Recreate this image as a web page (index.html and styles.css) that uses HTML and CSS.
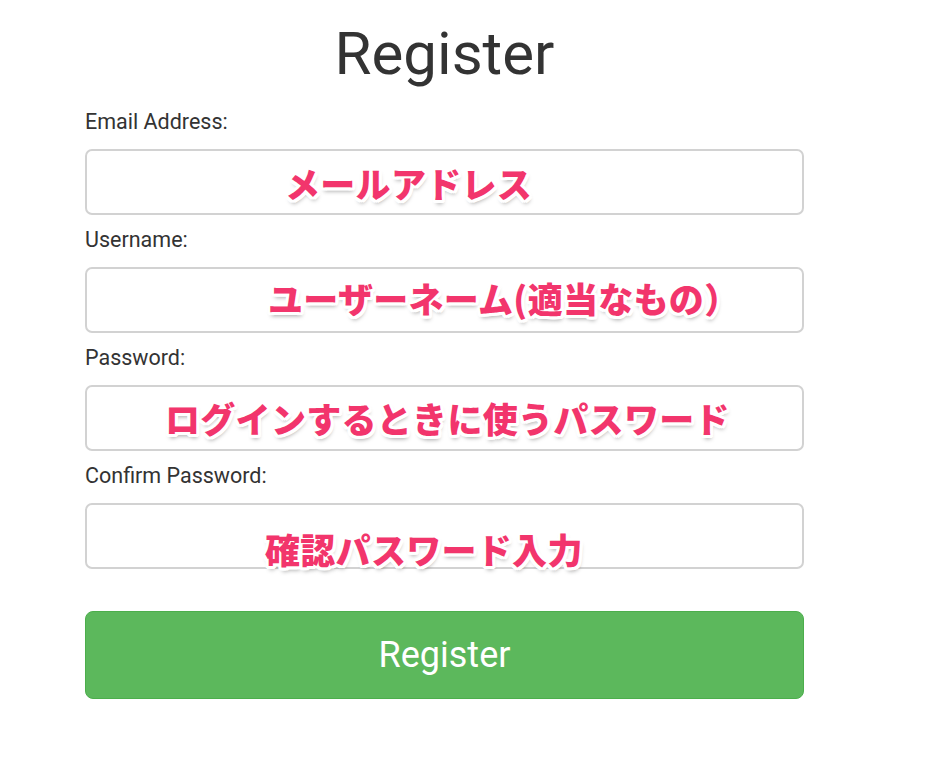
FILE: index.html
```html
<!DOCTYPE html>
<html lang="ja">
<head>
<meta charset="utf-8">
<title>Register</title>
<link rel="stylesheet" href="styles.css">
</head>
<body>
<div class="page">
  <h1 class="title">Register</h1>
  <form class="form">
    <div class="group">
      <label class="label">Email Address:</label>
      <div class="field">
        <input class="input" type="email">
        <span class="note note-email">メールアドレス</span>
      </div>
    </div>
    <div class="group">
      <label class="label">Username:</label>
      <div class="field">
        <input class="input" type="text">
        <span class="note note-user">ユーザーネーム(適当なもの）</span>
      </div>
    </div>
    <div class="group">
      <label class="label">Password:</label>
      <div class="field">
        <input class="input" type="password">
        <span class="note note-pass">ログインするときに使うパスワード</span>
      </div>
    </div>
    <div class="group">
      <label class="label">Confirm Password:</label>
      <div class="field">
        <input class="input" type="password">
        <span class="note note-confirm">確認パスワード入力</span>
      </div>
    </div>
    <button class="btn" type="button">Register</button>
  </form>
</div>
</body>
</html>
```

FILE: styles.css
```css
html, body {
  margin: 0;
  padding: 0;
  background: #fff;
}
body {
  font-family: Roboto, "Liberation Sans", "Noto Sans CJK JP", sans-serif;
  color: #333;
}
.page {
  width: 719px;
  margin-left: 85px;
  padding-top: 21px;
}
.title {
  margin: 0;
  font-size: 60px;
  font-weight: 400;
  line-height: 66px;
  text-align: center;
  color: #333;
}
.form {
  display: flex;
  flex-direction: column;
  margin-top: 23px;
}
.group {
  display: flex;
  flex-direction: column;
  gap: 15px;
  margin-bottom: 13px;
}
.label {
  font-size: 21.5px;
  line-height: 24px;
  color: #333;
}
.field {
  position: relative;
}
.input {
  display: block;
  box-sizing: border-box;
  width: 100%;
  height: 66px;
  margin: 0;
  border: 2px solid #d2d2d2;
  border-radius: 7px;
  background: #fff;
  outline: none;
}
.note {
  position: absolute;
  transform: translateY(-50%);
  font-family: "Noto Sans CJK JP", sans-serif;
  font-weight: 900;
  font-size: 35px;
  letter-spacing: 0.3px;
  line-height: 1;
  color: #f2356c;
  white-space: nowrap;
  text-shadow:
    2px 0 0 #fff, -2px 0 0 #fff, 0 2px 0 #fff, 0 -2px 0 #fff,
    2px 2px 0 #fff, -2px -2px 0 #fff, 2px -2px 0 #fff, -2px 2px 0 #fff,
    3px 0 0 #fff, -3px 0 0 #fff, 0 3px 0 #fff, 0 -3px 0 #fff,
    3px 2px 0 #fff, -3px 2px 0 #fff, 2px 3px 0 #fff, -2px 3px 0 #fff,
    1px 4px 4px rgba(0,0,0,0.35);
}
.note-email { left: 200px; top: 33px; }
.note-user { left: 183px; top: 30px; }
.note-pass { left: 80px; top: 32px; }
.note-confirm { left: 180px; top: 45px; }
.btn {
  margin-top: 29px;
  height: 88px;
  width: 100%;
  border: 1px solid #4cae4c;
  border-radius: 8px;
  background: #5cb85c;
  color: #fff;
  font-family: Roboto, "Liberation Sans", sans-serif;
  font-size: 36px;
  font-weight: 400;
  cursor: pointer;
}
```
